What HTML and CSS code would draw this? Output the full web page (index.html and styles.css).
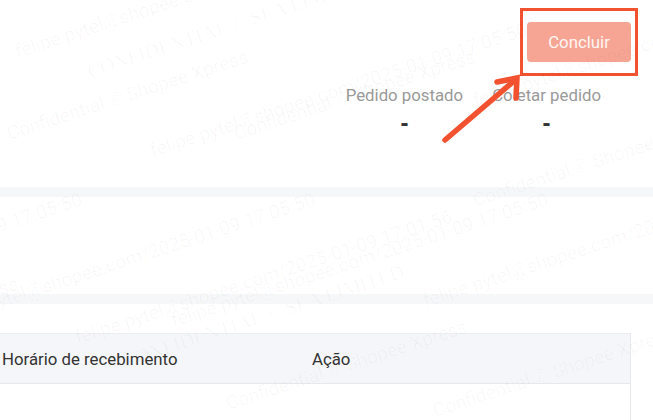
FILE: index.html
```html
<!DOCTYPE html>
<html lang="pt-BR">
<head>
<meta charset="utf-8">
<title>Pedido</title>
<link rel="stylesheet" href="styles.css">
</head>
<body>
<div class="page">
  <section class="card card-top">
    <div class="actions">
      <div class="highlight">
        <button class="btn" type="button">Concluir</button>
      </div>
    </div>
    <div class="stats">
      <div class="stat">
        <div class="stat-label">Pedido postado</div>
        <div class="stat-value">-</div>
      </div>
      <div class="stat">
        <div class="stat-label">Coletar pedido</div>
        <div class="stat-value">-</div>
      </div>
    </div>
  </section>
  <div class="band"></div>
  <section class="card card-empty"></section>
  <div class="band"></div>
  <section class="card card-table">
    <div class="table">
      <div class="thead">
        <div class="th th-time">Horário de recebimento</div>
        <div class="th th-action">Ação</div>
      </div>
      <div class="tbody"></div>
    </div>
  </section>

  <svg class="arrow" width="653" height="420" viewBox="0 0 653 420" aria-hidden="true">
    <line x1="445" y1="140" x2="514" y2="81" stroke="#f2522f" stroke-width="5.5" stroke-linecap="round"/>
    <polyline points="497,82 517,78 516,98" fill="none" stroke="#f2522f" stroke-width="5.5" stroke-linejoin="miter" stroke-linecap="round"/>
  </svg>

  <div class="watermark" aria-hidden="true">
    <div class="wm" style="left:12px;top:41px">felipe.pytel@shopee.com/2025-01-09 17:05:50</div>
    <div class="wm" style="left:147px;top:140px">felipe.pytel@shopee.com/2025-01-09 17:05:50</div>
    <div class="wm" style="left:-298px;top:310px">felipe.pytel@shopee.com/2025-01-09 17:05:50</div>
    <div class="wm" style="left:-65px;top:310px">felipe.pytel@shopee.com/2025-01-09 17:05:50</div>
    <div class="wm" style="left:168px;top:310px">felipe.pytel@shopee.com/2025-01-09 17:05:50</div>
    <div class="wm" style="left:420px;top:290px">felipe.pytel@shopee.com/2025-01-09 17:05:50</div>
    <div class="wm" style="left:470px;top:90px">felipe.pytel@shopee.com/2025-01-09 17:05:50</div>
    <div class="wm" style="left:72px;top:327px">felipe.pytel@shopee.com/2025-01-09 17:01:56</div>
    <div class="wm" style="left:4px;top:123px">Confidential © Shopee Xpress</div>
    <div class="wm" style="left:231px;top:123px">Confidential © Shopee Xpress</div>
    <div class="wm" style="left:-226px;top:350px">Confidential © Shopee Xpress</div>
    <div class="wm" style="left:223px;top:393px">Confidential © Shopee Xpress</div>
    <div class="wm" style="left:470px;top:190px">Confidential © Shopee Xpress</div>
    <div class="wm" style="left:430px;top:400px">Confidential © Shopee Xpress</div>
    <div class="wm wm-serif" style="left:84px;top:60px">CONFIDENTIAL © SEA LIMITED</div>
    <div class="wm wm-serif" style="left:119px;top:350px">CONFIDENTIAL © SEA LIMITED</div>
  </div>
</div>
</body>
</html>
```

FILE: styles.css
```css
* {
  box-sizing: border-box;
}

html, body {
  margin: 0;
  padding: 0;
  background: #ffffff;
}

body {
  font-family: Roboto, "Noto Sans", "Liberation Sans", sans-serif;
  font-size: 16.8px;
  color: #333333;
  width: 653px;
  height: 420px;
  overflow: hidden;
}

.page {
  position: relative;
  width: 653px;
  height: 420px;
  overflow: hidden;
}

.card {
  background: #ffffff;
}

.card-top {
  height: 187px;
  padding-top: 8px;
}

.actions {
  display: flex;
  justify-content: flex-end;
  padding-right: 15px;
}

.highlight {
  border: 3px solid #f2522f;
  padding: 11px 4px;
}

.btn {
  display: block;
  width: 104px;
  height: 40px;
  border: none;
  border-radius: 4px;
  background: #f6a595;
  color: #fff6f3;
  font-family: Roboto, "Noto Sans", "Liberation Sans", sans-serif;
  font-size: 16.8px;
  padding: 0;
}

.stats {
  display: flex;
  justify-content: flex-end;
  gap: 29px;
  padding-right: 52px;
  margin-top: 9px;
}

.stat {
  display: flex;
  flex-direction: column;
  align-items: center;
}

.stat-label {
  line-height: 20px;
  color: #9a9a9a;
}

.stat-value {
  margin-top: 4px;
  font-family: "Liberation Sans", Arial, sans-serif;
  font-weight: 700;
  font-size: 24px;
  line-height: 28px;
  color: #333333;
}

.band {
  height: 10px;
  background: #f6f7f9;
}

.card-empty {
  height: 97px;
}

.card-table {
  padding-top: 29px;
  padding-right: 22px;
  height: 116px;
}

.table {
  border-right: 1px solid #e8e9ec;
  height: 100%;
}

.thead {
  display: flex;
  align-items: center;
  height: 51px;
  background: #f5f6f9;
  border-top: 1px solid #eceef1;
  border-bottom: 1px solid #e6e8eb;
}

.th {
  line-height: 20px;
  color: #333333;
}

.th-time {
  width: 312px;
  padding-left: 2px;
}

.th-action {
  flex: 1;
}

.arrow {
  position: absolute;
  left: 0;
  top: 0;
  pointer-events: none;
  z-index: 3;
}

.watermark {
  position: absolute;
  inset: 0;
  pointer-events: none;
  overflow: hidden;
  z-index: 2;
}

.wm {
  position: absolute;
  white-space: nowrap;
  font-family: Roboto, "Liberation Sans", sans-serif;
  font-size: 19px;
  line-height: 24px;
  color: rgba(0, 0, 0, 0.03);
  transform-origin: 0 0;
  transform: rotate(-18deg);
}

.wm-serif {
  font-family: "Liberation Serif", serif;
  font-size: 20px;
}
```
